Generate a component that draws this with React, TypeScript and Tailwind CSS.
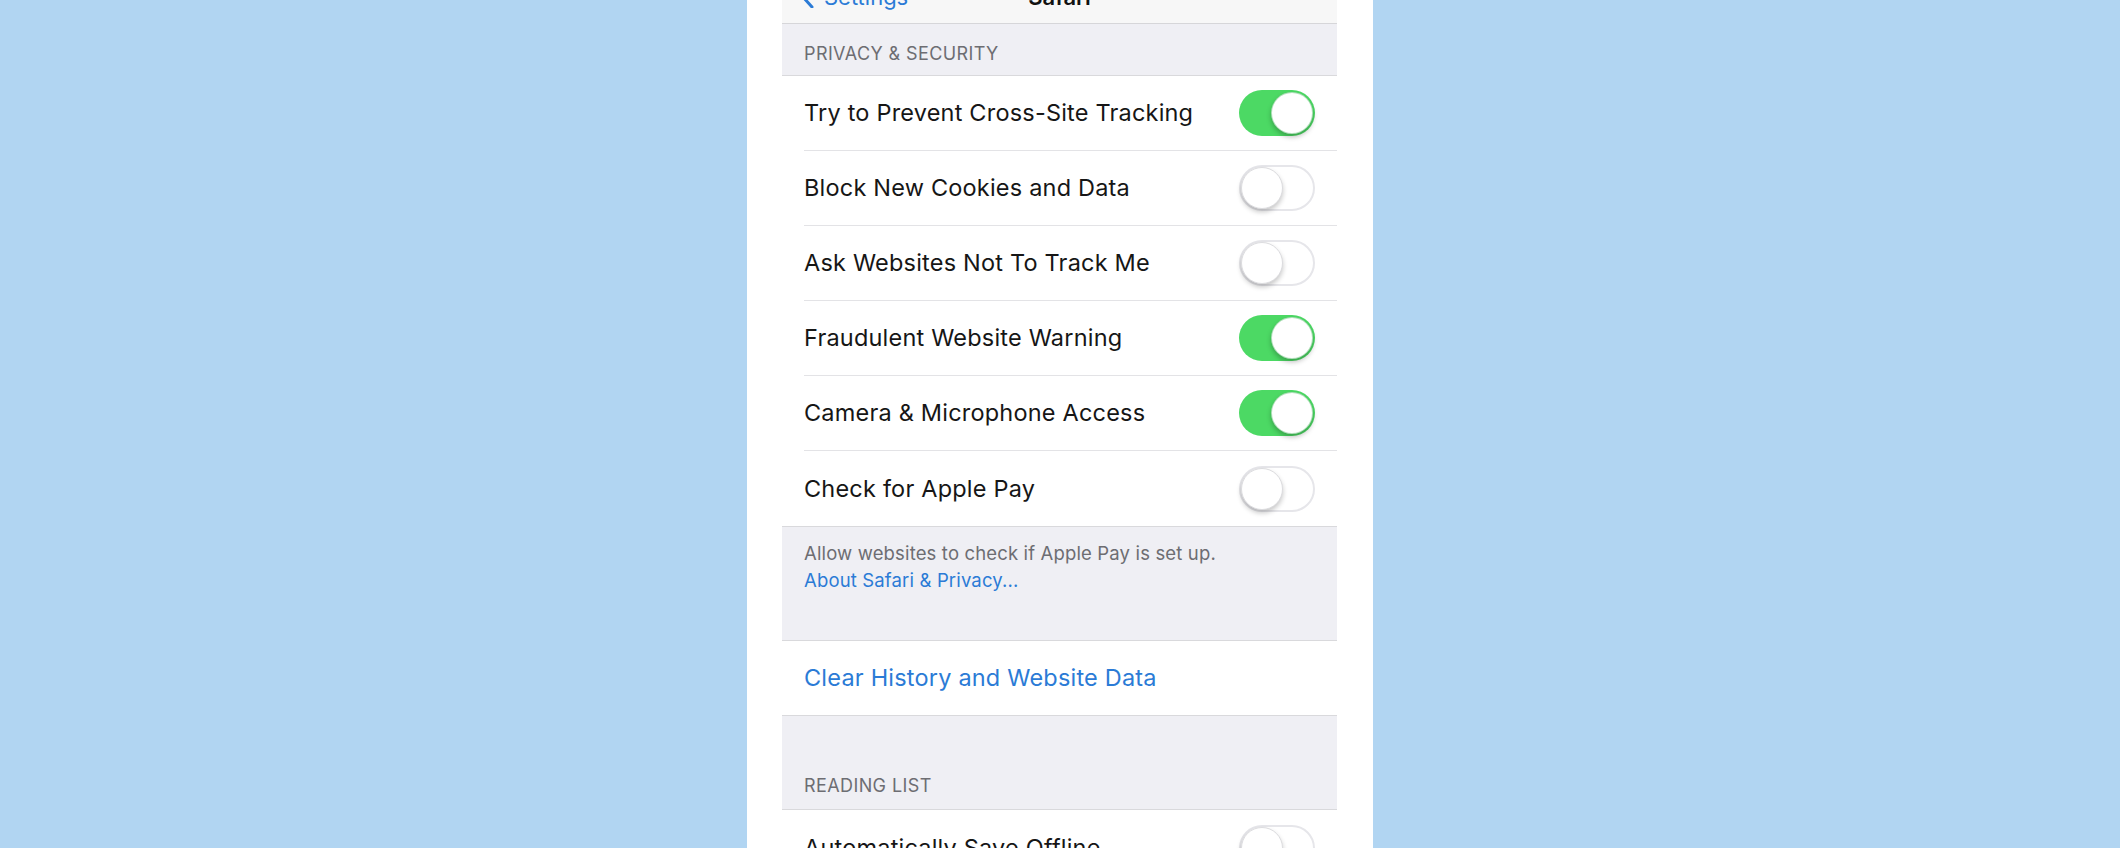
import React from 'react';

interface ToggleRow {
  label: string;
  on: boolean;
}

const privacyRows: ToggleRow[] = [
  { label: 'Try to Prevent Cross-Site Tracking', on: true },
  { label: 'Block New Cookies and Data', on: false },
  { label: 'Ask Websites Not To Track Me', on: false },
  { label: 'Fraudulent Website Warning', on: true },
  { label: 'Camera & Microphone Access', on: true },
  { label: 'Check for Apple Pay', on: false },
];

function Switch({ on }: { on: boolean }) {
  if (on) {
    return (
      <div className="w-[76px] h-[46px] rounded-full bg-[#4cd964] flex items-center justify-end p-[2px] shrink-0">
        <div className="w-[42px] h-[42px] rounded-full bg-white border border-[#3fae54]/40 shadow-[0_3px_5px_rgba(0,0,0,0.25)]" />
      </div>
    );
  }
  return (
    <div className="w-[76px] h-[46px] rounded-full bg-white border-2 border-[#e6e6ea] flex items-center justify-start shrink-0">
      <div className="w-[42px] h-[42px] rounded-full bg-white border border-[#dcdcdf] shadow-[0_3px_5px_rgba(0,0,0,0.22)]" />
    </div>
  );
}

function Row({ label, on, last }: ToggleRow & { last?: boolean }) {
  return (
    <div className="pl-[22px] bg-white">
      <div
        className={`h-[75px] flex items-center justify-between pr-[22px] ${
          last ? '' : 'border-b border-[#e3e3e6]'
        }`}
      >
        <span className="text-[23.5px] tracking-[0.2px] text-[#161616]">{label}</span>
        <Switch on={on} />
      </div>
    </div>
  );
}

export default function App() {
  return (
    <div className="h-[848px] bg-[#b1d5f2] flex justify-center overflow-hidden font-['Inter','Liberation_Sans',Arial,sans-serif]">
      <div className="w-[626px] bg-white pl-[35px] pr-[36px] flex flex-col">
        {/* nav bar, scrolled up so only the bottom of the titles shows */}
        <nav className="h-[24px] shrink-0 bg-[#f7f7f7] border-b border-[#d6d6d9] overflow-hidden relative">
          <div className="-mt-[16px] flex items-center h-[26px] pl-[19px]">
            <svg width="13" height="22" viewBox="0 0 13 22" className="shrink-0">
              <path d="M11 1 L2 11 L11 21" stroke="#2b7bd6" strokeWidth="3" fill="none" strokeLinecap="round" strokeLinejoin="round" />
            </svg>
            <span className="ml-[10px] text-[22px] leading-[26px] text-[#2b7bd6]">Settings</span>
          </div>
          <span className="absolute left-1/2 -translate-x-1/2 -top-[16px] text-[22px] leading-[26px] font-semibold text-[#111]">
            Safari
          </span>
        </nav>

        <div className="h-[52px] shrink-0 bg-[#efeff4] border-b border-[#d9d9dc] flex items-end pl-[22px] pb-[10px]">
          <span className="text-[18px] tracking-[0.4px] leading-[22px] text-[#6d6d72] uppercase">Privacy &amp; Security</span>
        </div>

        <div className="border-b border-[#d9d9dc]">
          {privacyRows.map((r, i) => (
            <Row key={r.label} label={r.label} on={r.on} last={i === privacyRows.length - 1} />
          ))}
        </div>

        <div className="h-[114px] shrink-0 bg-[#efeff4] border-b border-[#d9d9dc] pl-[22px] pt-[13px] text-[18.5px] tracking-[0.15px] leading-[27px]">
          <p className="text-[#6d6d72]">Allow websites to check if Apple Pay is set up.</p>
          <p className="text-[#2b7bd6]">About Safari &amp; Privacy...</p>
        </div>

        <div className="h-[75px] shrink-0 bg-white border-b border-[#d9d9dc] flex items-center pl-[22px]">
          <span className="text-[23.5px] tracking-[0.2px] text-[#2b7bd6]">Clear History and Website Data</span>
        </div>

        <div className="h-[94px] shrink-0 bg-[#efeff4] border-b border-[#d9d9dc] flex items-end pl-[22px] pb-[12px]">
          <span className="text-[18px] tracking-[0.4px] leading-[22px] text-[#6d6d72] uppercase">Reading List</span>
        </div>

        <Row label="Automatically Save Offline" on={false} last />
      </div>
    </div>
  );
}
